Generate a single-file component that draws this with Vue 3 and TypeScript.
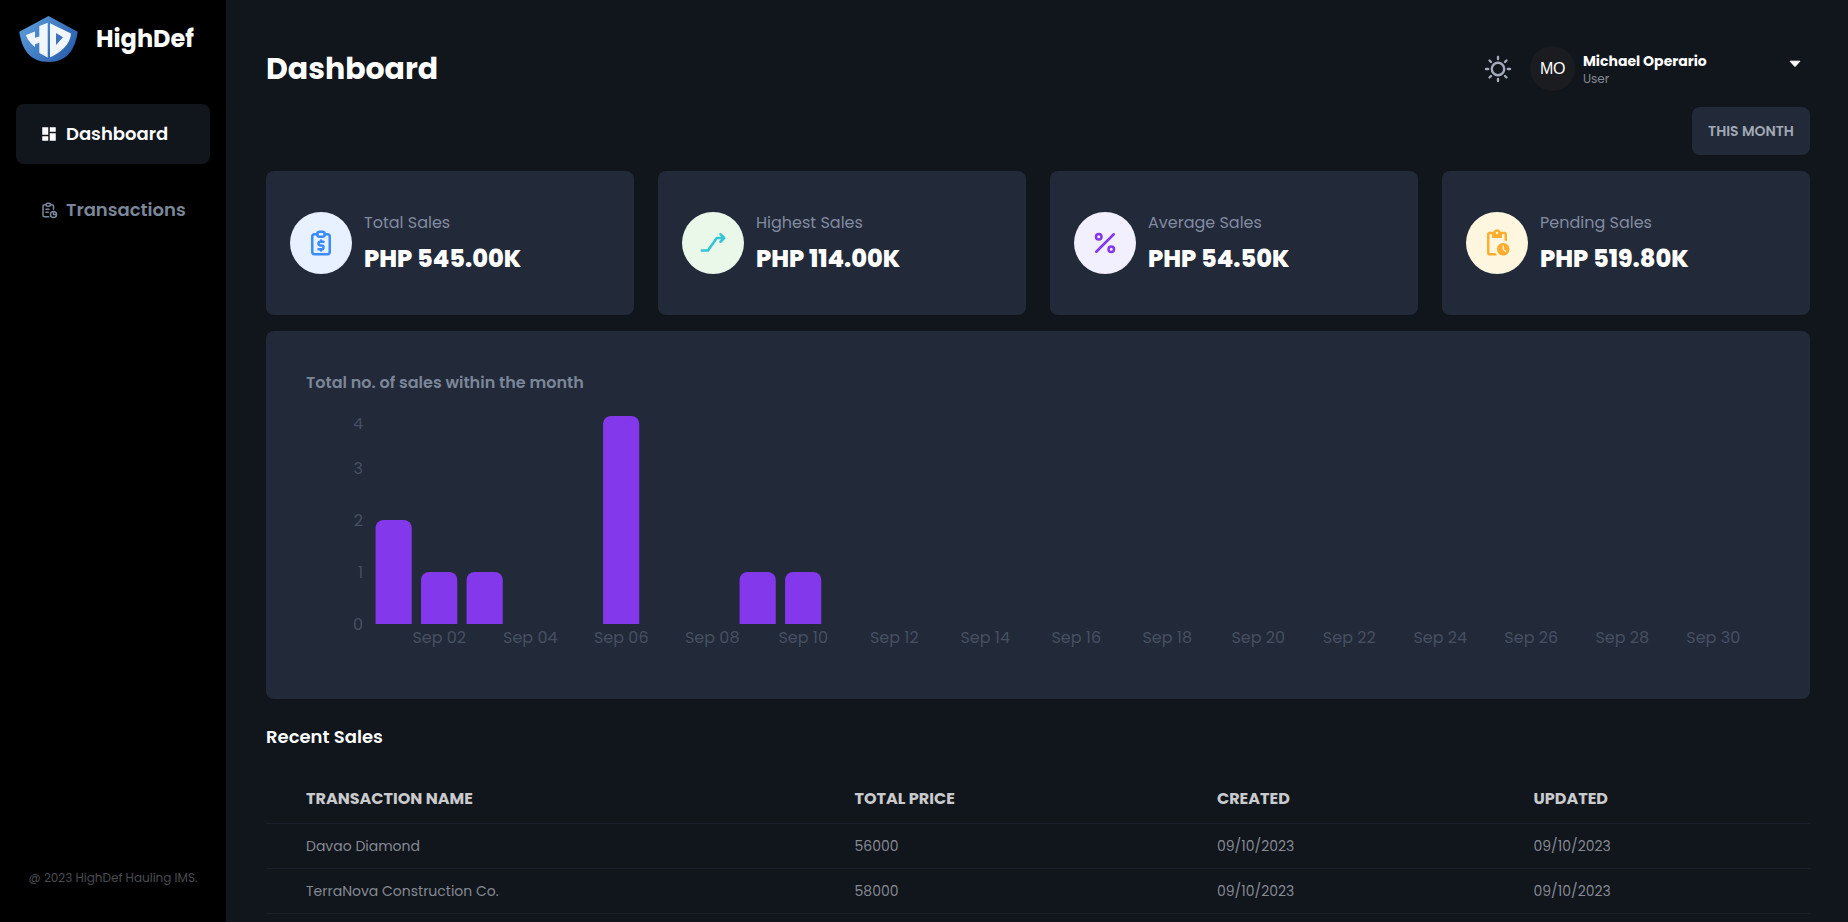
<script setup lang="ts">
type StatIcon = 'total' | 'highest' | 'average' | 'pending'

interface Stat {
  icon: StatIcon
  label: string
  value: string
}

interface Sale {
  name: string
  price: number
  created: string
  updated: string
}

const stats: Stat[] = [
  { icon: 'total', label: 'Total Sales', value: 'PHP 545.00K' },
  { icon: 'highest', label: 'Highest Sales', value: 'PHP 114.00K' },
  { icon: 'average', label: 'Average Sales', value: 'PHP 54.50K' },
  { icon: 'pending', label: 'Pending Sales', value: 'PHP 519.80K' },
]

const sales: Sale[] = [
  { name: 'Davao Diamond', price: 56000, created: '09/10/2023', updated: '09/10/2023' },
  { name: 'TerraNova Construction Co.', price: 58000, created: '09/10/2023', updated: '09/10/2023' },
]

/* Chart geometry */
const plotLeft = 65
const plotBase = 214
const band = 1365 / 30
const barWidth = 36.2
const unit = 52

const salesPerDay: Record<number, number> = { 1: 2, 2: 1, 3: 1, 6: 4, 9: 1, 10: 1 }

const bars = Object.entries(salesPerDay).map(([day, count]) => {
  const x = plotLeft + (Number(day) - 1) * band + band * 0.1
  const top = plotBase - count * unit
  const r = 8
  return {
    day,
    d: `M${x} ${plotBase}V${top + r}a${r} ${r} 0 0 1 ${r} ${-r}h${barWidth - 2 * r}a${r} ${r} 0 0 1 ${r} ${r}V${plotBase}z`,
  }
})

const dayLabels = Array.from({ length: 15 }, (_, i) => {
  const day = (i + 1) * 2
  return { text: `Sep ${String(day).padStart(2, '0')}`, x: plotLeft + (day - 0.5) * band }
})

const countLabels = [
  { text: '4', y: 19 },
  { text: '3', y: 64 },
  { text: '2', y: 116 },
  { text: '1', y: 168 },
  { text: '0', y: 220 },
]

const rayAngles = [0, 45, 90, 135, 180, 225, 270, 315]
</script>

<template>
  <div class="app">
    <aside class="sidebar">
      <div class="brand">
        <svg class="logo" width="61" height="48" viewBox="0 0 61 48">
          <defs>
            <linearGradient id="shield" gradientUnits="userSpaceOnUse" x1="4" y1="8" x2="52" y2="42">
              <stop offset="0" stop-color="#5b9bd8" />
              <stop offset="1" stop-color="#2a5fae" />
            </linearGradient>
          </defs>
          <path d="M30.5 1 59.7 16.8C57 35 49 47 30.5 47S4 35 1.3 16.8z" fill="url(#shield)" />
          <path
            d="M8 20 17 16.5 21.3 11 30.5 7.6 53 18.5C52.5 29 43 38 30.5 43L21.3 38 16.6 31.7C11.5 27 9 24 8 20z"
            fill="#f1f6fd"
          />
          <path d="M17 9h4.3v12.4L17 22.8zM17 29.2l4.3-1.4V40L17 33zM29.7 6H32v38h-2.300zM38 18l7 4.200L38 30z" fill="url(#shield)" />
        </svg>
        <span class="brand-name">HighDef</span>
      </div>

      <nav class="nav">
        <a class="nav-item active">
          <svg width="18" height="18" viewBox="0 0 24 24" fill="currentColor">
            <path d="M3 13h8V3H3v10zm0 8h8v-6H3v6zm10 0h8V11h-8v10zm0-18v6h8V3h-8z" />
          </svg>
          <span>Dashboard</span>
        </a>
        <a class="nav-item">
          <svg class="line" width="18" height="18" viewBox="0 0 24 24">
            <path d="M8 5H6a2 2 0 0 0-2 2v12a2 2 0 0 0 2 2h5.7M18 14v4h4M18 11V7a2 2 0 0 0-2-2h-2" />
            <rect x="8" y="3" width="6" height="4" rx="2" />
            <circle cx="18" cy="18" r="4" />
            <path d="M8 11h4M8 15h3" />
          </svg>
          <span>Transactions</span>
        </a>
      </nav>

      <footer class="copyright">@ 2023 HighDef Hauling IMS.</footer>
    </aside>

    <main class="main">
      <header class="topbar">
        <h1>Dashboard</h1>
        <svg class="sun" width="28" height="28" viewBox="-14 -14 28 28">
          <circle r="6.2" />
          <path v-for="a in rayAngles" :key="a" d="M9.9 0H12" :transform="`rotate(${a})`" />
        </svg>
        <div class="avatar">MO</div>
        <div class="identity">
          <strong>Michael Operario</strong>
          <span>User</span>
        </div>
        <svg class="caret" width="12" height="8" viewBox="0 0 12 8">
          <path d="M1 1.2h10L6 6.6z" />
        </svg>
      </header>

      <div class="filters">
        <button class="filter" type="button">THIS MONTH</button>
      </div>

      <section class="stats">
        <article v-for="s in stats" :key="s.icon" class="stat">
          <div class="stat-icon" :class="s.icon">
            <svg v-if="s.icon === 'total'" class="line" width="30" height="30" viewBox="0 0 24 24">
              <path d="M9 5H7a2 2 0 0 0-2 2v12a2 2 0 0 0 2 2h10a2 2 0 0 0 2-2V7a2 2 0 0 0-2-2h-2" />
              <rect x="9" y="3" width="6" height="4" rx="2" />
              <path d="M14 11h-2.5a1.5 1.5 0 0 0 0 3h1a1.5 1.5 0 0 1 0 3H10M12 17v1m0-8v1" />
            </svg>
            <svg v-else-if="s.icon === 'highest'" class="line" width="30" height="30" viewBox="0 0 24 24">
              <path d="M18 5l3 3-3 3M3 18h5l7-10h6" />
            </svg>
            <svg v-else-if="s.icon === 'average'" class="line" width="30" height="30" viewBox="0 0 24 24">
              <circle cx="17" cy="17" r="2.2" />
              <circle cx="7" cy="7" r="2.2" />
              <path d="M5 19 19 5" />
            </svg>
            <svg v-else width="30" height="30" viewBox="0 0 24 24" fill="currentColor">
              <path d="M17 12c-2.76 0-5 2.24-5 5s2.24 5 5 5 5-2.24 5-5-2.24-5-5-5zm1.65 7.35L16.5 17.2V14h1v2.79l1.85 1.85-.7.71zM18 3h-3.18C14.4 1.84 13.3 1 12 1s-2.4.84-2.82 2H6c-1.1 0-2 .9-2 2v15c0 1.1.9 2 2 2h6.11a6.743 6.743 0 0 1-1.42-2H6V5h2v3h8V5h2v5.08c.71.1 1.38.31 2 .6V5c0-1.1-.9-2-2-2zm-6 2c-.55 0-1-.45-1-1s.45-1 1-1 1 .45 1 1-.45 1-1 1z" />
            </svg>
          </div>
          <div class="stat-text">
            <span class="stat-label">{{ s.label }}</span>
            <span class="stat-value">{{ s.value }}</span>
          </div>
        </article>
      </section>

      <section class="chart-card">
        <h2>Total no. of sales within the month</h2>
        <svg class="chart" width="1464" height="249" viewBox="0 0 1464 249">
          <path v-for="b in bars" :key="b.day" class="bar" :d="b.d" />
          <text v-for="l in countLabels" :key="l.text" x="57" :y="l.y" text-anchor="end">{{ l.text }}</text>
          <text v-for="l in dayLabels" :key="l.text" :x="l.x" y="233" text-anchor="middle">{{ l.text }}</text>
        </svg>
      </section>

      <h3 class="section-title">Recent Sales</h3>
      <div class="table">
        <div class="row head">
          <span>TRANSACTION NAME</span>
          <span>TOTAL PRICE</span>
          <span>CREATED</span>
          <span>UPDATED</span>
        </div>
        <div v-for="sale in sales" :key="sale.name" class="row">
          <span>{{ sale.name }}</span>
          <span>{{ sale.price }}</span>
          <span>{{ sale.created }}</span>
          <span>{{ sale.updated }}</span>
        </div>
      </div>
    </main>
  </div>
</template>

<style>
body {
  margin: 0;
  background: #11151c;
}
</style>

<style scoped>
.app {
  display: flex;
  height: 100vh;
  overflow: hidden;
  background: #11151c;
  color: #fff;
  font-family: Poppins, Inter, sans-serif;
}

.app * {
  box-sizing: border-box;
}

.line {
  fill: none;
  stroke: currentColor;
  stroke-width: 2;
  stroke-linecap: round;
  stroke-linejoin: round;
}

.sidebar {
  display: flex;
  flex: none;
  flex-direction: column;
  width: 226px;
  padding: 15px 16px 34px;
  background: #000;
}

.brand {
  display: flex;
  align-items: center;
  height: 48px;
  padding-left: 2px;
}

.brand-name {
  margin-left: 17px;
  padding-bottom: 1px;
  font-size: 24px;
  font-weight: 700;
  line-height: 46px;
}

.nav {
  display: flex;
  flex-direction: column;
  gap: 16px;
  margin-top: 41px;
}

.nav-item {
  display: flex;
  align-items: center;
  gap: 8px;
  height: 60px;
  padding-left: 24px;
  border-radius: 8px;
  color: #7b8799;
  font-size: 18px;
  font-weight: 600;
}

.nav-item span {
  margin-top: -2px;
}

.nav-item.active {
  background: #11151c;
  color: #fff;
}

.copyright {
  margin-top: auto;
  color: #4a4c50;
  font-size: 12px;
  line-height: 20px;
  text-align: center;
}

.main {
  flex: 1;
  min-width: 0;
  padding: 46px 38px 0 40px;
}

.topbar {
  display: flex;
  align-items: center;
  height: 45px;
}

h1 {
  margin: 0 auto 0 0;
  font-size: 30px;
  font-weight: 700;
  line-height: 44px;
}

.sun {
  margin-right: 18px;
  fill: none;
  stroke: #a3aabb;
  stroke-width: 2.4;
  stroke-linecap: round;
}

.avatar {
  width: 45px;
  height: 45px;
  border-radius: 50%;
  background: #1a1c20;
  font: 16px/45px 'Liberation Sans', Arial, sans-serif;
  letter-spacing: -0.5px;
  text-align: center;
}

.identity {
  display: flex;
  flex-direction: column;
  width: 205.5px;
  padding: 1px 0 0 8px;
}

.identity strong {
  font-size: 14px;
  font-weight: 700;
  line-height: 18px;
}

.identity span {
  color: #858a93;
  font-size: 12px;
  line-height: 17px;
}

.caret {
  margin: 0 9px 10px 8.5px;
  fill: #fff;
  stroke: #fff;
  stroke-linejoin: round;
}

.filters {
  display: flex;
  justify-content: flex-end;
  margin: 16px 0;
}

.filter {
  width: 118px;
  height: 48px;
  padding: 0;
  border: 0;
  border-radius: 8px;
  background: #222938;
  color: #a1a9b5;
  font: inherit;
  font-size: 14px;
  font-weight: 600;
}

.stats {
  display: grid;
  grid-template-columns: repeat(4, 1fr);
  gap: 24px;
}

.stat {
  display: flex;
  align-items: center;
  gap: 12px;
  height: 144px;
  padding-left: 24px;
  border-radius: 8px;
  background: #222938;
}

.stat-icon {
  display: grid;
  place-items: center;
  width: 62px;
  height: 62px;
  border-radius: 50%;
}

.stat-icon.total {
  background: #e7f1ff;
  color: #3a8bff;
}

.stat-icon.highest {
  background: #eaf8ea;
  color: #31c5d5;
}

.stat-icon.average {
  background: #f2efff;
  color: #8338ec;
}

.stat-icon.pending {
  background: #fff6e0;
  color: #ffad2f;
}

.stat-text {
  display: flex;
  flex-direction: column;
  gap: 8px;
  margin-top: -2px;
}

.stat-label {
  color: #818ba1;
  font-size: 16px;
  line-height: 24px;
}

.stat-value {
  font-size: 24px;
  font-weight: 800;
  line-height: 31px;
}

.chart-card {
  height: 368px;
  margin-top: 16px;
  padding: 40px 40px 0;
  border-radius: 8px;
  background: #222938;
}

h2 {
  margin: 0 0 15px;
  color: #7b8798;
  font-size: 16px;
  font-weight: 600;
  line-height: 24px;
}

.chart {
  display: block;
  fill: #465063;
  font-size: 16px;
}

.bar {
  fill: #8338ec;
}

.section-title {
  margin: 24px 0 23px;
  font-size: 18px;
  font-weight: 600;
  line-height: 28px;
}

.row {
  display: grid;
  grid-template-columns: 548.5px 362.5px 316.5px 1fr;
  align-items: center;
  height: 45px;
  border-bottom: 1px solid #1a1f29;
  color: #858a93;
  font-size: 14px;
}

.row span {
  padding-left: 40px;
}

.row.head {
  height: 50px;
  color: #c9cacc;
  font-size: 16px;
  font-weight: 700;
}
</style>
